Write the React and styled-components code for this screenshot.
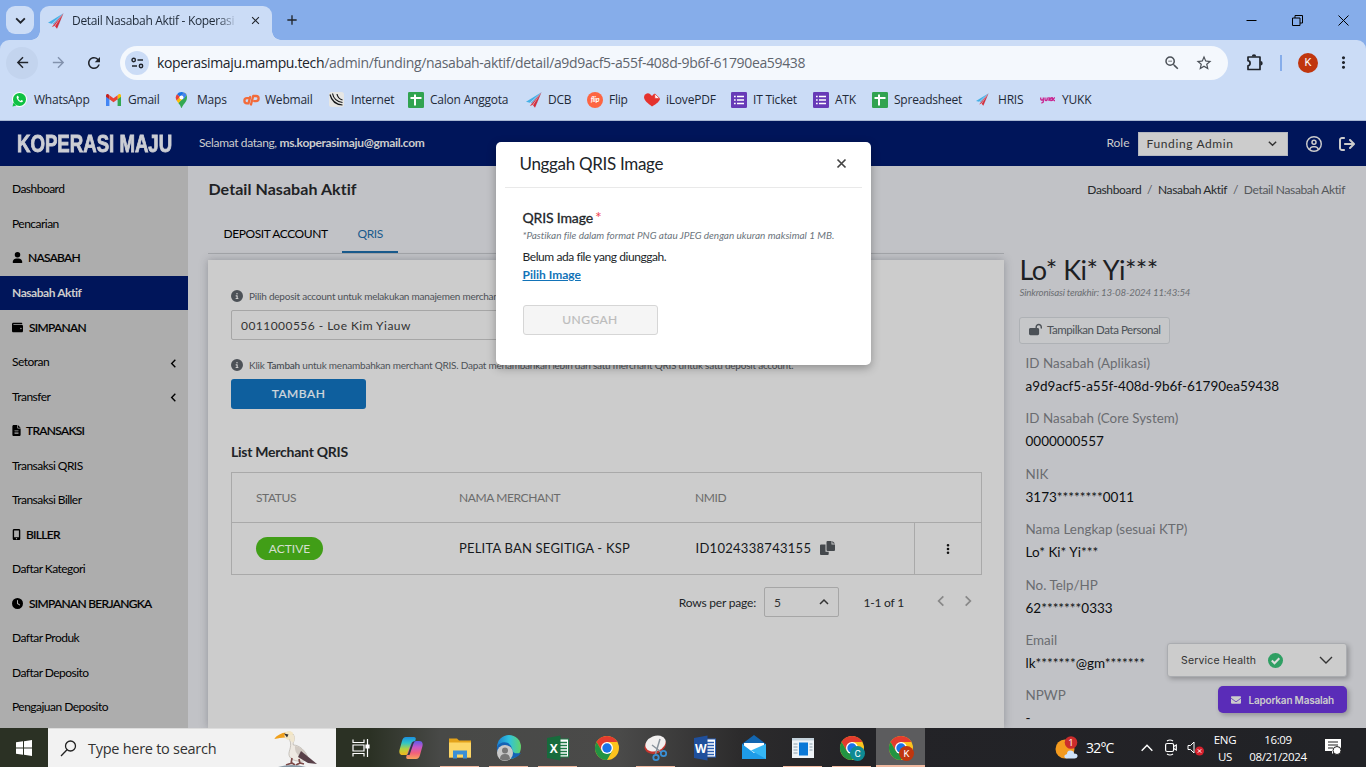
import React from 'react';
import styled, { createGlobalStyle, css } from 'styled-components';
import {
  FaUser, FaWallet, FaFileLines, FaMobileScreenButton, FaClock, FaCircleInfo, FaLockOpen,
  FaEnvelope, FaRegCircleUser, FaArrowRightFromBracket, FaEllipsisVertical,
} from 'react-icons/fa6';
import { MdZoomOut, MdStarBorder, MdArrowBack, MdArrowForward, MdRefresh, MdAdd, MdClose, MdMoreVert } from 'react-icons/md';

const Global = createGlobalStyle`
  *, *::before, *::after { box-sizing: border-box; }
  html, body { margin: 0; padding: 0; overflow: hidden; }
  body { font-family: Lato, "Liberation Sans", sans-serif; font-size: 12px; color: #212529; }
  svg { display: block; flex: none; }
`;

const ui = css`font-family: "Open Sans", "Noto Sans", sans-serif;`;
const navy = '#00155a';

const Screen = styled.div`
  width: 1366px; height: 767px; display: flex; flex-direction: column; overflow: hidden; position: relative;
`;

/* ---------- browser chrome ---------- */
const TabStrip = styled.div`
  height: 40px; flex: none; background: #86adea; display: flex; align-items: flex-start; ${ui}
`;
const TabSearch = styled.div`
  width: 28px; height: 28px; margin: 6px 6px 0; border-radius: 9px; background: #cbdcf6;
  display: flex; align-items: center; justify-content: center;
`;
const Tab = styled.div`
  width: 232px; height: 34px; margin-top: 6px; padding: 0 10px 5px 8px; border-radius: 9px 9px 0 0; background: #cbdcf6;
  display: flex; align-items: center; position: relative;
  &::before, &::after {
    content: ''; position: absolute; bottom: 0; width: 9px; height: 9px;
  }
  &::before { left: -9px; background: radial-gradient(circle at 0 0, #86adea 8.5px, #cbdcf6 9px); }
  &::after { right: -9px; background: radial-gradient(circle at 100% 0, #86adea 8.5px, #cbdcf6 9px); }
`;
const TabTitle = styled.div`
  width: 166px; margin-left: 8px; white-space: nowrap; font-size: 12px; letter-spacing: -0.33px; color: #1f2a38;
  mask-image: linear-gradient(90deg, #000 88%, transparent);
`;
const TabClose = styled.div`margin-left: auto; color: #20242b;`;
const NewTab = styled.div`margin: 12px 0 0 12px; color: #20242b;`;
const WindowButtons = styled.div`
  margin-left: auto; display: flex; height: 40px; align-items: center; gap: 35px; padding-right: 17px;
`;
const Toolbar = styled.div`
  height: 45px; flex: none; background: #cbdcf6; border-radius: 9px 9px 0 0; display: flex; align-items: center;
  color: #20242b; ${ui}
`;
const ToolbarBack = styled.div`background: #86adea; flex: none;`;
const NavButton = styled.div`
  width: 32px; height: 32px; margin-right: 4px; border-radius: 50%; background: ${p => (p.$halo ? '#c3d4ee' : 'transparent')};
  color: ${p => (p.$dim ? '#8292ad' : '#20242b')}; display: flex; align-items: center; justify-content: center;
`;
const NavGroup = styled.div`display: flex; padding-left: 6px; width: 120px;`;
const Omnibox = styled.div`
  width: 1108px; height: 34px; border-radius: 17px; background: #f4f8fd; display: flex; align-items: center; padding: 0 15px 0 5px;
`;
const SiteInfo = styled.div`
  width: 24px; height: 24px; border-radius: 50%; background: #cbdcf6; display: flex; align-items: center; justify-content: center;
`;
const Url = styled.div`
  margin-left: 8px; font-size: 14px; letter-spacing: -0.345px; color: #5f656e; white-space: nowrap; flex: 1;
  span { color: #20242b; }
`;
const OmniIcons = styled.div`display: flex; gap: 14px; color: #4b5158;`;
const ToolbarEnd = styled.div`display: flex; align-items: center; padding-left: 17px;`;
const Divider = styled.div`width: 2px; height: 16px; background: #86adea; margin: 0 16px 0 16px;`;
const Avatar = styled.div`
  width: 20px; height: 20px; border-radius: 50%; background: #c0360e; color: #fff; font: 11px Roboto, sans-serif;
  display: flex; align-items: center; justify-content: center; margin-right: 16px;
`;
const Bookmarks = styled.div`
  height: 36px; flex: none; padding: 0 0 6px 12px; background: #cbdcf6; border-bottom: 1px solid #a6b6d3; display: flex; align-items: center; ${ui}
`;
const Bookmark = styled.div`
  width: ${p => p.$w}px; flex: none; display: flex; align-items: center; white-space: nowrap; font-size: 12px; letter-spacing: -0.22px; color: #1f2a38;
`;
const BookmarkIcon = styled.div`width: 22px; flex: none;`;

/* ---------- application ---------- */
const AppHeader = styled.header`
  height: 45px; flex: none; background: ${navy}; color: #ccc; display: flex; align-items: center; padding: 0 11.5px 2px 17px;
`;
const Brand = styled.div`
  width: 182px; font: bold 23.5px/45px "Liberation Sans", sans-serif; white-space: nowrap; color: #ccced4; padding-top: 3px;
  span { display: inline-block; transform: scaleX(0.792); transform-origin: 0 50%; -webkit-text-stroke: 0.9px #ccced4; }
`;
const Welcome = styled.div`font-size: 12px; letter-spacing: -0.37px; flex: 1; b { letter-spacing: -0.33px; }`;
const RoleSelect = styled.div`
  width: 150px; height: 24px; margin: 2px 18px 0 8px; padding: 0 9px 0 8px; background: #ccc; border: 1px solid #b5b8bf; color: #333;
  display: flex; align-items: center; justify-content: space-between; letter-spacing: 0.62px; font-size: 12px;
`;
const HeaderIcons = styled.div`display: flex; gap: 17px; align-items: center; padding-top: 2px;`;
const Body = styled.div`height: 562px; flex: none; display: flex; background: #c1c2c6;`;
const Sidebar = styled.nav`
  width: 188px; flex: none; background: #adadad; padding-top: 6.2px; overflow: hidden;
`;
const NavItem = styled.div`
  height: 34.53px; padding: 0 9.5px 1px 12px; display: flex; align-items: center; font-size: 12px;
  letter-spacing: ${p => (p.$active ? -0.45 : -0.53)}px;
  white-space: nowrap; color: ${p => (p.$active ? '#ccc' : '#000')};
  background: ${p => (p.$active ? navy : 'transparent')};
  font-weight: ${p => (p.$active ? 700 : 400)};
  svg { margin-left: auto; margin-top: 3px; }
`;
const NavSection = styled.div`
  height: 34.53px; padding: 0 12px 1px; display: flex; align-items: center; gap: 6px; font-size: 12px; font-weight: 500;
  white-space: nowrap; color: #000; letter-spacing: -0.7px; -webkit-text-stroke: 0.15px #000;
`;
const NavIcon = styled.span`width: ${p => p.$w}px; display: flex; justify-content: center;`;
const Main = styled.main`flex: 1; padding: 11px 20px 0 20px; display: flex; flex-direction: column; min-width: 0;`;
const TitleRow = styled.div`display: flex; justify-content: space-between; align-items: center; height: 24px; padding: 0 1px 0 0;`;
const PageTitle = styled.h1`margin: 0; padding: 0 0 1px 0.5px; font-size: 16px; font-weight: 700; letter-spacing: 0.06px; color: #1f2225;`;
const Crumbs = styled.div`
  display: flex; gap: 5.8px; font-size: 12px; letter-spacing: -0.35px; color: #26292c;
  span { color: #55585c; }
`;
const Columns = styled.div`display: flex; flex: 1; min-height: 0;`;
const Left = styled.section`width: 796px; display: flex; flex-direction: column;`;
const Tabs = styled.div`height: 53px; border-bottom: 1px solid #a3a5a9; display: flex; align-items: flex-end; flex: none;`;
const TabItem = styled.div`
  height: 37px; padding: 0 15.5px; font-size: 12px; line-height: 35px; white-space: nowrap; letter-spacing: -0.42px;
  width: ${p => p.$w}px;
  color: ${p => (p.$on ? '#195b8d' : '#000')};
  border-bottom: 2px solid ${p => (p.$on ? '#195b8d' : 'transparent')};
`;
const Card = styled.div`
  margin-top: 6px; flex: 1; background: #ccc; padding: 29px 22px 0 23px; box-shadow: 0 0 8px rgba(60, 62, 75, 0.35);
`;
const Info = styled.div`
  height: 14px; display: flex; align-items: center; gap: 6px; color: #4c5157; font-size: 10px; letter-spacing: -0.225px; white-space: nowrap;
  b { font-weight: 600; }
`;
const AccountSelect = styled.div`
  width: 600px; height: 30px; margin: 7px 0 18px; border: 1px solid #a6a6a6; border-radius: 2px; padding: 0 9px;
  display: flex; align-items: center; font-size: 12px; letter-spacing: 0.46px; color: #333;
`;
const PrimaryButton = styled.button`
  width: 135px; height: 30px; margin-top: 7px; border: 0; border-radius: 3px; background: #0e5f9e; color: #cfd6dc; display: block;
  font: 500 12px Lato, sans-serif; letter-spacing: 0.5px; padding: 0 0 1px; -webkit-text-stroke: 0.2px #cfd6dc;
`;
const ListTitle = styled.h2`margin: 34px 0 11px; font-size: 14px; line-height: 18px; font-weight: 700; letter-spacing: -0.25px; color: #212427;`;
const Table = styled.div`border: 1px solid #a9a9a9;`;
const Row = styled.div`
  display: grid; grid-template-columns: 203px 236px 219px 1fr; padding-left: 24px; align-items: center;
  height: ${p => p.$h}px; border-top: ${p => (p.$line ? '1px solid #a9a9a9' : '0')};
  font-size: ${p => (p.$head ? 12 : 13)}px; letter-spacing: ${p => (p.$head ? -0.4 : 0.2)}px; color: ${p => (p.$head ? '#6b6b6b' : '#16191c')};
`;
const Cell = styled.div`padding-bottom: 2px;`;
const Badge = styled.div`
  width: 67px; height: 23px; border-radius: 12px; background: #419e17; color: #d5dfd0; font-size: 12px; letter-spacing: 0;
  display: flex; align-items: center; justify-content: center;
`;
const Nmid = styled.div`
  display: flex; align-items: center; gap: 9px; padding: 0 0 2px 0.5px; letter-spacing: 0.28px;
`;
const Action = styled.div`
  height: 51px; border-left: 1px solid #a9a9a9; display: flex; align-items: center; justify-content: center; color: #111;
`;
const Pager = styled.div`
  display: flex; align-items: center; justify-content: flex-end; margin-top: 12px; height: 30px; font-size: 12px; letter-spacing: -0.2px; padding-right: 7px; color: #212427;
`;
const PageSize = styled.div`
  width: 75px; height: 30px; margin: 0 24.5px 0 8px; border: 1px solid #a6a6a6; border-radius: 2px; padding: 0 8px 0 9px;
  display: flex; align-items: center; justify-content: space-between; color: #333;
`;
const Arrows = styled.div`display: flex; gap: 13px; margin: 0 0 3px 30px;`;

const Person = styled.aside`padding: 51px 0 0 15.5px; flex: 1; min-width: 0;`;
const Name = styled.div`font-size: 27px; line-height: 36px; height: 35px; letter-spacing: -0.55px; color: #1d2023;`;
const Sync = styled.div`font-size: 9.7px; line-height: 12px; font-style: italic; letter-spacing: -0.17px; margin-top: -1px; color: #6b6e72;`;
const ShowButton = styled.div`
  width: 151px; height: 27px; margin: 19px 0 0 -0.5px; border: 1px solid #aeb1b5; border-radius: 3px; background: #c6c7c9;
  display: flex; align-items: center; padding: 0 9px 2px; gap: 5px; color: #4c5157; font-size: 11.5px; letter-spacing: -0.44px; white-space: nowrap;
`;
const Fields = styled.dl`margin: 8px 0 0 6px;`;
const Field = styled.div`height: 55.4px;`;
const Label = styled.dt`font-size: 13.4px; line-height: 22px; letter-spacing: 0.03px; color: #6a6c70;`;
const Value = styled.dd`margin: 0; font-size: 13.5px; line-height: 25px; color: #0c0e10; white-space: nowrap;`;

/* ---------- overlays ---------- */
const Modal = styled.div`
  position: absolute; left: 496px; top: 142px; width: 375px; height: 223px; background: #fff; border-radius: 5px;
  box-shadow: 0 3px 10px rgba(0, 0, 0, 0.3);
`;
const ModalHead = styled.div`
  margin: 0 9px; height: 46px; padding: 0 15px 2px 14.5px; border-bottom: 1px solid #e9e9e9; display: flex; align-items: center; justify-content: space-between;
  font-size: 17px; letter-spacing: -0.32px; color: #212529;
`;
const ModalBody = styled.div`padding: 21px 26.5px;`;
const ModalLabel = styled.div`
  font-size: 14px; line-height: 18px; letter-spacing: -0.15px; -webkit-text-stroke: 0.3px #212529;
  span { color: #f0434f; -webkit-text-stroke: 0; margin-left: 2px; font-size: 16px; line-height: 10px; }
`;
const Hint = styled.div`font-size: 10px; line-height: 16px; font-style: italic; color: #6c757d; letter-spacing: -0.01px; white-space: nowrap;`;
const FileStatus = styled.div`margin-top: 5px; font-size: 12px; line-height: 18px; letter-spacing: -0.43px;`;
const FileLink = styled.div`font-size: 12px; line-height: 17px; font-weight: 700; color: #1273b8; text-decoration: underline;`;
const DisabledButton = styled.button`
  display: block; margin-top: 22px; width: 135px; height: 30px; border: 1px solid #d6d6d6; border-radius: 3px; background: #f5f5f5; color: #bcbcbc;
  font: 12px Lato, sans-serif; letter-spacing: 0.45px; padding: 0 0 1px; -webkit-text-stroke: 0.2px #bcbcbc;
`;
const Health = styled.div`
  position: absolute; left: 1167px; top: 643px; width: 180px; height: 34px; background: #ccc; border: 1px solid #aaacb0; border-radius: 3px;
  box-shadow: 2px 2px 5px rgba(0, 0, 0, 0.25); display: flex; align-items: center; padding: 0 13px 0;
  font: 10.5px Inter, sans-serif; letter-spacing: 0.17px; color: #333;
  svg:nth-of-type(1) { margin-left: 11.5px; }
  svg:nth-of-type(2) { margin-left: auto; }
`;
const Report = styled.div`
  position: absolute; left: 1218px; top: 686px; width: 129px; height: 27px; border-radius: 5px; background: #5a2cb8; color: #ccc;
  box-shadow: 2px 2px 5px rgba(0, 0, 0, 0.25); display: flex; align-items: center; gap: 7.5px; padding: 0 13px; font: 600 10px Inter, sans-serif;
  letter-spacing: -0.2px; white-space: nowrap;
`;

/* ---------- taskbar ---------- */
const Taskbar = styled.div`
  height: 39px; flex: none; display: flex; align-items: stretch; color: #fff; ${ui}
  background: linear-gradient(90deg, #2b3124 0, #2b3124 370px, #484947 440px, #4a4a49 620px, #2c2b2c 740px, #232327 860px, #212226 100%);
`;
const Start = styled.div`width: 48px; display: flex; align-items: center; justify-content: center;`;
const SearchBox = styled.div`
  width: 288px; background: #f2f2f2; color: #333; display: flex; align-items: center; padding-left: 12px; font-size: 14.5px; letter-spacing: -0.27px;
  white-space: nowrap; border-top: 1px solid #ddd;
  span { margin-left: 11px; width: 160px; margin-right: 26px; }
`;
const TaskItem = styled.div`
  width: ${p => p.$w || 49}px; display: flex; align-items: center; justify-content: center; flex: none;
  background: ${p => (p.$on ? '#5c5c5e' : 'transparent')};
  box-shadow: ${p => (p.$on ? 'inset 0 -2px #f0b9a0' : 'none')};
  position: relative;
  &::after { content: ''; display: ${p => (p.$run ? 'block' : 'none')}; position: absolute; bottom: 0; left: 5px; right: 5px; height: 1px; background: #f0b9a0; }
`;
const Tray = styled.div`margin-left: auto; display: flex; align-items: center; padding-right: 24px; font-size: 14px;`;
const Temp = styled.div`margin: 0 21px 0 7px; width: 32px; letter-spacing: -0.8px; white-space: nowrap;`;
const TrayIcons = styled.div`display: flex; gap: 10px; align-items: center; margin-right: 8px;`;
const TrayText = styled.div`
  width: ${p => p.$w}px; margin-right: ${p => p.$mr}px; text-align: center; font-size: 11.5px; line-height: 17px; letter-spacing: -0.35px; white-space: nowrap;
`;

/* ---------- drawings ---------- */
const Svg = ({ w, h = w, vb, children, ...rest }) => (
  <svg width={w} height={h} viewBox={vb || `0 0 ${w} ${h}`} fill="none" {...rest}>{children}</svg>
);
const Chevron = ({ dir = 'down', w = 12, sw = 1.5, color = 'currentColor' }) => {
  const d = { down: 'M2 4l4 4 4-4', up: 'M2 8l4-4 4 4', left: 'M8 2L4 6l4 4', right: 'M4 2l4 4-4 4' }[dir];
  return <Svg w={w} vb="0 0 12 12"><path d={d} stroke={color} strokeWidth={sw} /></Svg>;
};
const Plane = ({ s = 16 }) => (
  <Svg w={s} vb="0 0 16 16">
    <path d="M15.500.3L0 9.800l3.800 1z" fill="#45b0e6" />
    <path d="M15.500.3L4.600 11l1.200.6z" fill="#5fa9d8" />
    <path d="M15.500.3L3.800 14l2.700-1z" fill="#e0343f" />
    <path d="M15.500.3L7 13.200l2 2.600z" fill="#d42f3c" />
    <path d="M15.500.3L9.600 14.400l1.400-3z" fill="#4a9bd4" />
  </Svg>
);
const Gmail = () => (
  <Svg w={15} h={12} vb="0 0 15 12">
    <path d="M0 1.6V12h3.4V5.2L1 2z" fill="#4285f4" />
    <path d="M15 1.6V12h-3.4V5.2L14 2z" fill="#34a853" />
    <path d="M11.6 1.2v4L15 2.8V1.6C15 .3 13.5-.4 12.4.5z" fill="#fbbc04" />
    <path d="M0 1.6v1.2l3.4 2.4v-4L2.6.5C1.5-.4 0 .3 0 1.6z" fill="#c5221f" />
    <path d="M3.4 5.2v-4l4.1 3.1 4.1-3.1v4L7.5 8.3z" fill="#ea4335" />
  </Svg>
);
const Maps = () => (
  <Svg w={13} h={16} vb="0 0 13 16">
    <path d="M11.700 3.100L3.300 11.100C4.800 13 5.700 14 6 15.600c.1.500.8.500 1 0C7.600 12.600 12 10.600 12 5.600c0-1-.1-1.800-.3-2.500z" fill="#34a853" />
    <path d="M9 .5L1.600 8.500l1.700 2.600 8.400-8A6 6 0 0 0 9 .5z" fill="#fbbc04" />
    <path d="M9 .5L5 5l3.500 2.500 3.200-4.400A6 6 0 0 0 9 .5z" fill="#4285f4" />
    <path d="M6.500 0A5.600 5.600 0 0 0 2 2.200L5 5l4-4.500A6 6 0 0 0 6.500 0z" fill="#1a73e8" />
    <path d="M2 2.200A5.600 5.600 0 0 0 1.600 8.500L5 5z" fill="#ea4335" />
    <circle cx="6.500" cy="5.400" r="2" fill="#fff" />
  </Svg>
);
const CPanel = () => (
  <Svg w={17} h={12} vb="0 0 17 12" stroke="#f26b3a" strokeWidth="2.300" strokeLinecap="round" strokeLinejoin="round">
    <path d="M6.500 4.200H4a2.600 2.600 0 0 0 0 5.200h1.500L7.200 3" />
    <path d="M8 10.500L10.200 2H13a2.600 2.600 0 0 1 0 5.200h-1.800" />
  </Svg>
);
const Internet = () => (
  <Svg w={15} vb="0 0 15 15">
    <rect width="15" height="15" rx="2.500" fill="#e6e6e4" />
    <path d="M1 2.500c1.500 6 5 10 12.500 10.500M3.500 1.500c1 5 4.500 8.300 10 9M8 2c.5 3 2.500 5 5.500 6" stroke="#16181a" strokeWidth="1.200" />
  </Svg>
);
const Sheet = () => (
  <Svg w={16} vb="0 0 16 16">
    <rect width="16" height="16" rx="1.300" fill="#31a350" />
    <path d="M7 2.500v11M2.500 6h11" stroke="#fff" strokeWidth="2" />
  </Svg>
);
const Flip = () => (
  <Svg w={16} vb="0 0 16 16">
    <circle cx="8" cy="8" r="8" fill="#fd6542" />
    <text x="8" y="10.200" textAnchor="middle" fontSize="7" fontStyle="italic" fontWeight="700" fontFamily="Lato, sans-serif" fill="#fff">flip</text>
  </Svg>
);
const Heart = () => (
  <Svg w={16} h={14} vb="0 0 16 14">
    <path d="M8 13.500C4 10.500 0 7.500 0 4a3.800 3.800 0 0 1 7-2L8 3l1.500-1.800L11 1l5 5c-1 3.500-5 5.500-8 7.500z" fill="#e5322d" />
    <path d="M10.800.800L15.600 5.400h-4.800z" fill="#fff" stroke="#e5322d" strokeWidth=".7" />
  </Svg>
);
const Form = () => (
  <Svg w={16} vb="0 0 16 16">
    <rect width="16" height="16" rx="1.300" fill="#673ab7" />
    <path d="M3 4.500h1.700M3 8h1.700M3 11.500h1.700M6 4.500h7M6 8h7M6 11.500h7" stroke="#fff" strokeWidth="1.600" />
  </Svg>
);
const Yukk = () => (
  <Svg w={15} h={8} vb="0 0 15 8" stroke="#c9238f" strokeWidth="1.300">
    <path d="M.7 1.500v1.200q0 1.300 1.300 1.300t1.300-1.300V1.500v4q0 1.500-2 1.300M5 1.500v2q0 1 1 1t1.200-1v-2M9 1v4M11.500 1.500L9.500 3.200 11.500 5M12.200 1v4M15 1.500l-2.200 1.700L15 5" />
  </Svg>
);
const WhatsApp = () => (
  <Svg w={15} vb="0 0 15 15">
    <circle cx="7.500" cy="7.500" r="7.500" fill="#fff" />
    <circle cx="7.500" cy="7.400" r="6.500" fill="#0fc143" /><path d="M.5 14.500l1-4 3 3z" fill="#0fc143" />
    <path d="M5.300 3.800c-1.200 1-.8 2.800.8 4.600s3.600 2.400 4.700 1.200c.5-.6.300-.9-1.400-1.600l-.9.900C7.600 8.600 6.600 7.600 6.200 6.600l.7-.8c-.4-1.500-.7-2.300-1.600-2z" fill="#fff" />
  </Svg>
);
const Puzzle = () => (
  <Svg w={19} vb="0 0 19 19">
    <path d="M3 4h12v12.500H3v-3.700a2.600 2.600 0 0 0 0-5.100z" stroke="#20242b" strokeWidth="1.700" strokeLinejoin="round" />
    <path d="M6.800 3.500a2.200 2.200 0 0 1 4.400 0zM15.500 8a2.200 2.200 0 0 1 0 4.400z" fill="#20242b" />
  </Svg>
);
const CopyPages = () => (
  <Svg w={15} h={14} vb="0 0 15 14">
    <path d="M1 3.500h4.500v7.200h3.200V13q0 1-1 1H1q-1 0-1-1V4.500q0-1 1-1z" fill="#45494d" />
    <path d="M7.500 0h4v3.500H15V9q0 1-1 1H7.500q-1 0-1-1V1q0-1 1-1z" fill="#45494d" />
    <path d="M12.400 0L15 2.600h-2.600z" fill="#45494d" />
  </Svg>
);
const ChromeLogo = ({ s = 24, badge, color }) => (
  <Svg w={28} h={28} vb="0 0 28 28">
    <g transform={`translate(${(28 - s) / 2} ${(28 - s) / 2}) scale(${s / 24})`}>
      <circle cx="12" cy="12" r="12" fill="#fcc31e" />
      <path d="M12 6h10.400A12 12 0 0 0 1.600 6L6.800 15z" fill="#e33b2e" />
      <path d="M1.600 6A12 12 0 0 0 12 24l5.200-9L12 17.500 6.800 15z" fill="#229342" />
      <circle cx="12" cy="12" r="6" fill="#fff" />
      <circle cx="12" cy="12" r="4.700" fill="#1a73e8" />
    </g>
    {badge && <circle cx="19.500" cy="19.500" r="7.500" fill={color} />}
    {badge && <text x="19.500" y="23" textAnchor="middle" fontSize="9.500" fontFamily="Roboto, sans-serif" fill="#fff">{badge}</text>}
  </Svg>
);
const Bird = () => (
  <Svg w={44} h={38} vb="0 0 44 38">
    <path d="M0 10Q5 4 12 3.500l2 5Q7 8 0 10z" fill="#f0a01c" />
    <circle cx="15" cy="6.500" r="4.500" fill="#f3e6c4" />
    <path d="M10 4.500l4.500 1-1.500 3z" fill="#333" />
    <path d="M19.300 5.500c3 5-1 7.500 0 10.500 6 0 13 6 15 14-5 3.500-15 3-18.500-2-3-5 3-9 0-17z" fill="#eee9e2" stroke="#aaa49c" strokeWidth=".6" />
    <path d="M15.500 6l4-.3c2 3 1 5.500-.2 8l-3-2z" fill="#f0e6cf" />
    <path d="M21 17c7 1 12 7 14 13l-8-2c-4-2-6.500-6-6-11z" fill="#d1cac3" />
    <path d="M27 22l16 13-9-1-10-6z" fill="#594149" />
    <path d="M18 29l-1 6M25 30l1 5M12 36l6-2 3 2M22 36l4-2 4 1" stroke="#7c4a48" strokeWidth="1.700" />
    <path d="M4 38q14-4 28 0z" fill="#8999a6" />
  </Svg>
);
const Office = ({ letter, color, dark }) => (
  <Svg w={22} h={26} vb="0 0 22 26">
    <rect x="11" y="4" width="10.500" height="18" fill="#fff" stroke={color} strokeWidth="1" />
    <path d="M13 7.500h7M13 10.500h7M13 13.500h7M13 16.500h7M13 19.500h7" stroke={color} strokeWidth="1.300" />
    <path d="M0 3L13.500.500v25L0 23z" fill={dark} />
    <text x="6.700" y="17.500" textAnchor="middle" fontSize="12" fontWeight="700" fontFamily="Open Sans, sans-serif" fill="#fff">{letter}</text>
  </Svg>
);
const Grad = ({ id, stops, x2 = 0, y2 = 1 }) => (
  <linearGradient id={id} x1="0" y1="0" x2={x2} y2={y2}>
    {stops.map((c, i) => <stop key={c} offset={i / (stops.length - 1)} stopColor={c} />)}
  </linearGradient>
);
const Copilot = () => (
  <Svg w={24} h={24} vb="0 0 24 24">
    <defs>
      <Grad id="cpa" stops={['#1c8fe0', '#2fc6c8', '#b5d13f', '#f2b51d']} />
      <Grad id="cpb" stops={['#5d5ce8', '#c557c9', '#f2607a', '#f7a35c']} />
    </defs>
    <path d="M7 1h8q2.500 0 1.500 3l-4 11q-1.200 4-4.500 4H4q-4.500 0-3.500-5L3 5q1-4 4-4z" fill="url(#cpa)" />
    <path d="M17 23H9q-2.500 0-1.500-3l4-11q1.200-4 4.500-4h4q4.500 0 3.500 5L21 19q-1 4-4 4z" fill="url(#cpb)" />
    <path d="M13 6.500l-4 11q-.7 1.500-1.800 1.500h3.300l4-11.500q.8-2.500 2.500-2.500-3.200 0-4 1.500z" fill="#2f3a48" />
  </Svg>
);
const Explorer = () => (
  <Svg w={22} h={22} vb="0 0 22 22">
    <path d="M0 1.500h8l2 2h12v17H0z" fill="#e3a21a" />
    <path d="M0 5.500h22v15H0z" fill="#fcd667" />
    <path d="M4 21.500v-8h14v8h-4v-4H8v4z" fill="#3b8fd6" />
  </Svg>
);
const Edge = () => (
  <Svg w={26} h={26} vb="0 0 26 26">
    <defs><Grad id="edg" x2={1} y2={0} stops={['#1b7fd0', '#2fc2df', '#63d36a']} /></defs>
    <circle cx="13" cy="12" r="12" fill="url(#edg)" />
    <path d="M1 12c3-6 11-6 14-1 3 6 0 8 10 7-4 6-12 7-17 4C3 20 0 16 1 12z" fill="#1563b5" />
    <circle cx="9" cy="18" r="8" fill="#c9c9c9" />
    <circle cx="9" cy="15.500" r="3" fill="#777" />
    <path d="M4 24q0-5 5-5t5 5q-5 3-10 0z" fill="#777" />
  </Svg>
);
const Snip = () => (
  <Svg w={26} h={28} vb="0 0 26 28">
    <ellipse cx="12" cy="11.500" rx="11" ry="8" transform="rotate(-22 12 11)" fill="#c7352e" />
    <ellipse cx="12.500" cy="9.500" rx="10.500" ry="7.500" transform="rotate(-22 12.500 9.500)" fill="#f1efef" />
    <path d="M17 5l-4.500 15M9 11l9 7" stroke="#8a939c" strokeWidth="1.500" />
    <circle cx="13" cy="23.500" r="2.700" stroke="#3a8fd4" strokeWidth="1.800" />
    <circle cx="20.500" cy="19.500" r="2.700" stroke="#3a8fd4" strokeWidth="1.800" />
  </Svg>
);
const Mail = () => (
  <Svg w={24} h={26} vb="0 0 24 26">
    <path d="M0 9L12 0l12 9v3H0z" fill="#1266b1" />
    <path d="M2 8h20v10H2z" fill="#fff" />
    <path d="M0 9l12 9 12-9v15H0z" fill="#1e9be8" />
    <path d="M24 9v15L9 15.500z" fill="#35b6f4" />
  </Svg>
);
const Panel = () => (
  <Svg w={22} h={20} vb="0 0 22 20">
    <rect width="22" height="20" fill="#eef3f7" />
    <rect width="22" height="2.500" fill="#c4d2dc" />
    <rect x="7" y="4.500" width="9" height="13" fill="#0a78d7" />
    <path d="M1.500 6h4M1.500 9h4M1.500 12h4M1.500 15h4M17.500 6h3M17.500 9h3M17.500 12h3" stroke="#8da0ad" />
  </Svg>
);
const TaskView = () => (
  <Svg w={18} h={18} vb="0 0 18 18" stroke="#fff" strokeWidth="1.200">
    <path d="M1 .5v3h11v-3M1 17.500v-3h11v3M1 6h11v6H1zM15.500 0v18" /><path d="M14 6h3v3h-3z" fill="#fff" />
  </Svg>
);
const Weather = () => (
  <Svg w={24} h={24} vb="0 0 24 24">
    <circle cx="10" cy="13" r="9.500" fill="#f39a1e" />
    <path d="M10 22q-2-3 2-4 0-4 4-3.500 3 .5 3 3 4 0 3.500 3-.5 2-3 2h-8z" fill="#cfe3fa" />
    <circle cx="16" cy="6.500" r="6.300" fill="#cb2c2c" />
    <text x="16" y="10" textAnchor="middle" fontSize="9.500" fontFamily="Open Sans, sans-serif" fill="#fff">1</text>
  </Svg>
);

const bookmarks = [
  ['WhatsApp', 94, <WhatsApp />], ['Gmail', 69, <Gmail />], ['Maps', 68, <Maps />], ['Webmail', 86, <CPanel />], ['Internet', 79, <Internet />],
  ['Calon Anggota', 118, <Sheet />], ['DCB', 61, <Plane />], ['Flip', 57, <Flip />], ['iLovePDF', 87, <Heart />], ['IT Ticket', 82, <Form />],
  ['ATK', 59, <Form />], ['Spreadsheet', 104, <Sheet />], ['HRIS', 64, <Plane s={13} />], ['YUKK', 60, <Yukk />],
];
const nav = [
  { t: 'Dashboard' }, { t: 'Pencarian' }, { t: 'NASABAH', icon: <FaUser size={11} />, w: 10 }, { t: 'Nasabah Aktif', active: true },
  { t: 'SIMPANAN', icon: <FaWallet size={11} />, w: 11 }, { t: 'Setoran', more: true }, { t: 'Transfer', more: true },
  { t: 'TRANSAKSI', icon: <FaFileLines size={11} />, w: 8 }, { t: 'Transaksi QRIS' }, { t: 'Transaksi Biller' },
  { t: 'BILLER', icon: <FaMobileScreenButton size={11} />, w: 8 }, { t: 'Daftar Kategori' }, { t: 'SIMPANAN BERJANGKA', icon: <FaClock size={11} />, w: 11 },
  { t: 'Daftar Produk' }, { t: 'Daftar Deposito' }, { t: 'Pengajuan Deposito' },
];
const fields = [
  ['ID Nasabah (Aplikasi)', 'a9d9acf5-a55f-408d-9b6f-61790ea59438'], ['ID Nasabah (Core System)', '0000000557'], ['NIK', '3173********0011'],
  ['Nama Lengkap (sesuai KTP)', 'Lo* Ki* Yi***'], ['No. Telp/HP', '62*******0333'], ['Email', 'lk*******@gm*******'], ['NPWP', '-'],
];

export default function App() {
  return (
    <Screen>
      <Global />
      <TabStrip>
        <TabSearch><Chevron w={13} sw={1.7} color="#20242b" /></TabSearch>
        <Tab>
          <Plane />
          <TabTitle>Detail Nasabah Aktif - Koperasi</TabTitle>
          <TabClose><MdClose size={13} /></TabClose>
        </Tab>
        <NewTab><MdAdd size={16} /></NewTab>
        <WindowButtons>
          <Svg w={11}><path d="M.5 5.500h10" stroke="#000" /></Svg>
          <Svg w={11}><path d="M.5 3h7.500v7.500H.5zM3 3V.5h7.500V8H8" stroke="#000" /></Svg>
          <Svg w={11}><path d="M.5.5l10 10M10.500.5l-10 10" stroke="#000" /></Svg>
        </WindowButtons>
      </TabStrip>
      <ToolbarBack>
        <Toolbar>
          <NavGroup>
            <NavButton $halo><MdArrowBack size={17} /></NavButton>
            <NavButton $dim><MdArrowForward size={17} /></NavButton>
            <NavButton><MdRefresh size={18} /></NavButton>
          </NavGroup>
          <Omnibox>
            <SiteInfo>
              <Svg w={13} h={12} stroke="#20242b" strokeWidth="1.400">
                <circle cx="2.700" cy="3" r="1.700" /><path d="M6.500 3h5.500M1 9h5" /><circle cx="10" cy="9" r="1.700" />
              </Svg>
            </SiteInfo>
            <Url><span>koperasimaju.mampu.tech</span>/admin/funding/nasabah-aktif/detail/a9d9acf5-a55f-408d-9b6f-61790ea59438</Url>
            <OmniIcons><MdZoomOut size={18} /><MdStarBorder size={18} /></OmniIcons>
          </Omnibox>
          <ToolbarEnd>
            <Puzzle />
            <Divider />
            <Avatar>K</Avatar>
            <MdMoreVert size={19} />
          </ToolbarEnd>
        </Toolbar>
      </ToolbarBack>
      <Bookmarks>
        {bookmarks.map(([t, w, icon]) => (
          <Bookmark key={t} $w={w}><BookmarkIcon>{icon}</BookmarkIcon>{t}</Bookmark>
        ))}
      </Bookmarks>

      <AppHeader>
        <Brand><span>KOPERASI MAJU</span></Brand>
        <Welcome>Selamat datang, <b>ms.koperasimaju@gmail.com</b></Welcome>
        Role
        <RoleSelect>Funding Admin<Chevron w={11} /></RoleSelect>
        <HeaderIcons><FaRegCircleUser size={16} /><FaArrowRightFromBracket size={16} /></HeaderIcons>
      </AppHeader>
      <Body>
        <Sidebar>
          {nav.map(n => (n.icon
            ? <NavSection key={n.t}><NavIcon $w={n.w}>{n.icon}</NavIcon>{n.t}</NavSection>
            : <NavItem key={n.t} $active={n.active}>{n.t}{n.more && <Chevron dir="left" w={11} sw={1.5} />}</NavItem>))}
        </Sidebar>
        <Main>
          <TitleRow>
            <PageTitle>Detail Nasabah Aktif</PageTitle>
            <Crumbs>Dashboard <span>/</span> Nasabah Aktif <span>/</span> <span>Detail Nasabah Aktif</span></Crumbs>
          </TitleRow>
          <Columns>
            <Left>
              <Tabs><TabItem $w={134}>DEPOSIT ACCOUNT</TabItem><TabItem $w={56} $on>QRIS</TabItem></Tabs>
              <Card>
                <Info><FaCircleInfo size={12} />Pilih deposit account untuk melakukan manajemen merchant QRIS.</Info>
                <AccountSelect>0011000556 - Loe Kim Yiauw</AccountSelect>
                <Info><FaCircleInfo size={12} /><div>Klik <b>Tambah</b> untuk menambahkan merchant QRIS. Dapat menambahkan lebih dari satu merchant QRIS untuk satu deposit account.</div></Info>
                <PrimaryButton>TAMBAH</PrimaryButton>
                <ListTitle>List Merchant QRIS</ListTitle>
                <Table>
                  <Row $h={49} $head><div>STATUS</div><div>NAMA MERCHANT</div><div>NMID</div></Row>
                  <Row $h={52} $line>
                    <Badge>ACTIVE</Badge>
                    <Cell>PELITA BAN SEGITIGA - KSP</Cell>
                    <Nmid>ID1024338743155<CopyPages /></Nmid>
                    <Action><FaEllipsisVertical size={12} /></Action>
                  </Row>
                </Table>
                <Pager>
                  Rows per page:
                  <PageSize>5<Chevron dir="up" w={12} /></PageSize>
                  1-1 of 1
                  <Arrows><Chevron dir="left" w={14} sw={1.5} color="#888" /><Chevron dir="right" w={14} sw={1.5} color="#888" /></Arrows>
                </Pager>
              </Card>
            </Left>
            <Person>
              <Name>Lo* Ki* Yi***</Name>
              <Sync>Sinkronisasi terakhir: 13-08-2024 11:43:54</Sync>
              <ShowButton><FaLockOpen size={13} />Tampilkan Data Personal</ShowButton>
              <Fields>{fields.map(([l, v]) => <Field key={l}><Label>{l}</Label><Value>{v}</Value></Field>)}</Fields>
            </Person>
          </Columns>
        </Main>
      </Body>

      <Taskbar>
        <Start><Svg w={16}><path d="M0 2.300L7 1.300V7.600H0zM8 1.200L16 0v7.600H8zM0 8.500h7v6.300L0 13.800zM8 8.500h8V16l-8-1.200z" fill="#fff" /></Svg></Start>
        <SearchBox>
          <Svg w={17} stroke="#222" strokeWidth="1.300"><circle cx="10.500" cy="6" r="5" /><path d="M7 9.800L1 16" /></Svg>
          <span>Type here to search</span>
          <Bird />
        </SearchBox>
        <TaskItem $w={50}><TaskView /></TaskItem>
        <TaskItem><Copilot /></TaskItem>
        <TaskItem $run><Explorer /></TaskItem>
        <TaskItem $run><Edge /></TaskItem>
        <TaskItem $run><Office letter="X" color="#1f7a48" dark="#176b3c" /></TaskItem>
        <TaskItem><ChromeLogo /></TaskItem>
        <TaskItem $run><Snip /></TaskItem>
        <TaskItem><Office letter="W" color="#2b5fb3" dark="#1f4f9c" /></TaskItem>
        <TaskItem><Mail /></TaskItem>
        <TaskItem $run><Panel /></TaskItem>
        <TaskItem $run><ChromeLogo badge="C" color="#0e8a94" /></TaskItem>
        <TaskItem $on><ChromeLogo badge="K" color="#c0360e" /></TaskItem>
        <Tray>
          <Weather />
          <Temp>32°C</Temp>
          <TrayIcons>
            <Chevron dir="up" w={16} sw={1.1} />
            <Svg w={12} h={17} stroke="#fff" strokeWidth="1.200"><path d="M2 2q3-2 6 0M2 15q3 2 6 0" /><rect x=".6" y="4.500" width="8" height="8" rx="1.500" /><path d="M8.600 7.500l2.700-1.500v5L8.600 9.500" /></Svg>
            <Svg w={18} h={16}><path d="M1 5.500h2.500L7 2v11L3.500 9.500H1z" stroke="#fff" /><circle cx="12.500" cy="11" r="4.500" fill="#d6202c" /><path d="M10.800 9.300l3.400 3.400M14.200 9.300l-3.400 3.400" stroke="#fff" /></Svg>
          </TrayIcons>
          <TrayText $w={24} $mr={11}>ENG<br />US</TrayText>
          <TrayText $w={60} $mr={17}>16:09<br />08/21/2024</TrayText>
          <Svg w={17}><path d="M0 0h16v12h-6l-3 3v-3H0z" fill="#fff" /><path d="M3 3h10M3 6h10M3 9h5" stroke="#222" strokeWidth="1.200" /><circle cx="12" cy="11.500" r="4" fill="#fff" stroke="#222" /></Svg>
        </Tray>
      </Taskbar>

      <Health>
        Service Health
        <Svg w={15}><circle cx="7.500" cy="7.500" r="7.500" fill="#2f9f63" /><path d="M3.800 7.500l2.700 2.800 4.800-5" stroke="#ddd" strokeWidth="2" /></Svg>
        <Svg w={14} h={8}><path d="M1 1l6 6 6-6" stroke="#333" strokeWidth="1.400" /></Svg>
      </Health>
      <Report><FaEnvelope size={10} />Laporkan Masalah</Report>
      <Modal>
        <ModalHead>Unggah QRIS Image<Svg w={11}><path d="M1.500 1.500l8 8M9.500 1.500l-8 8" stroke="#444" strokeWidth="1.700" /></Svg></ModalHead>
        <ModalBody>
          <ModalLabel>QRIS Image<span>*</span></ModalLabel>
          <Hint>*Pastikan file dalam format PNG atau JPEG dengan ukuran maksimal 1 MB.</Hint>
          <FileStatus>Belum ada file yang diunggah.</FileStatus>
          <FileLink>Pilih Image</FileLink>
          <DisabledButton>UNGGAH</DisabledButton>
        </ModalBody>
      </Modal>
    </Screen>
  );
}
